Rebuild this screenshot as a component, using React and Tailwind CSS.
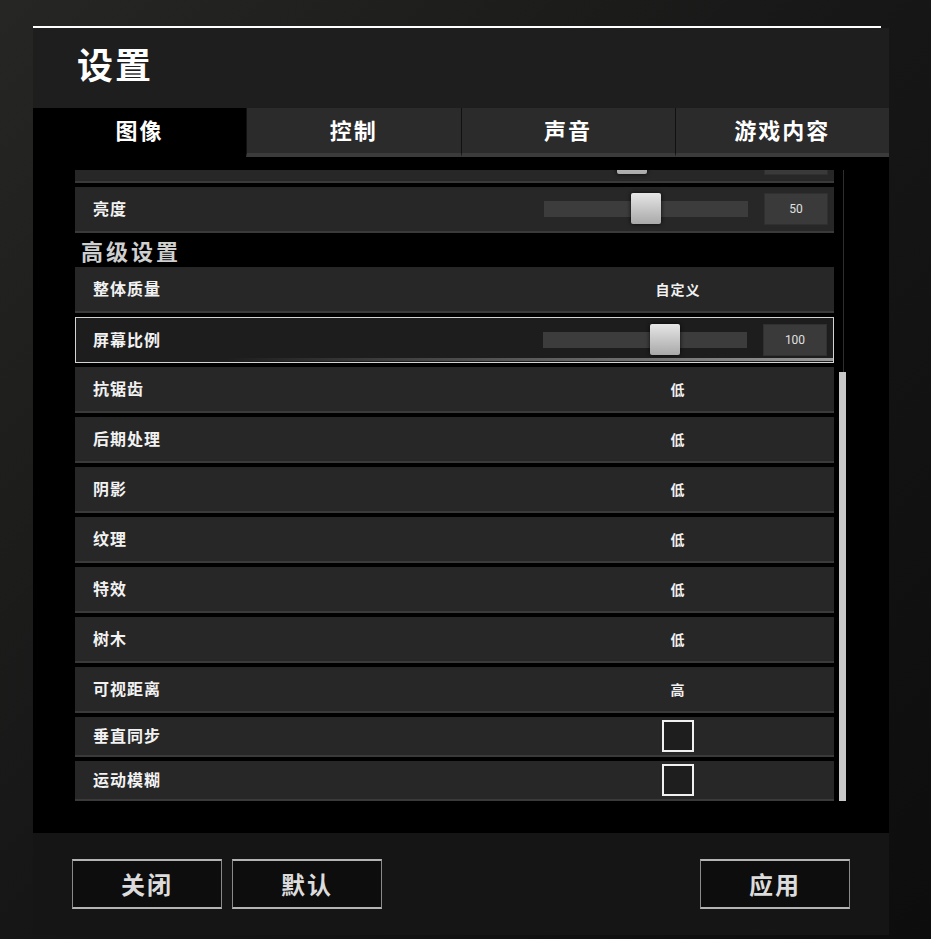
import React from 'react';

const FONT = { fontFamily: '"Noto Sans CJK SC", "Noto Sans", sans-serif' };

const TABS = ['图像', '控制', '声音', '游戏内容'];

const ROWS = [
  { label: '整体质量', type: 'text', value: '自定义' },
  { label: '屏幕比例', type: 'slider', value: 100, pos: 0.615, active: true },
  { label: '抗锯齿', type: 'text', value: '低' },
  { label: '后期处理', type: 'text', value: '低' },
  { label: '阴影', type: 'text', value: '低' },
  { label: '纹理', type: 'text', value: '低' },
  { label: '特效', type: 'text', value: '低' },
  { label: '树木', type: 'text', value: '低' },
  { label: '可视距离', type: 'text', value: '高' },
  { label: '垂直同步', type: 'check' },
  { label: '运动模糊', type: 'check' },
];

function Slider({ value, pos }) {
  return (
    <div className="flex items-center w-[290px] h-full">
      <div className="relative w-[204px] h-[16px] bg-[#3c3c3c]">
        <div
          className="absolute top-[-8px] w-[30px] h-[31px] rounded-[2px] bg-gradient-to-b from-[#e6e6e6] to-[#a9a9a9] shadow-[0_0_4px_rgba(0,0,0,0.8)]"
          style={{ left: `${Math.round(pos * 174)}px` }}
        />
      </div>
      <div className="ml-[16px] w-[64px] h-[32px] flex items-center justify-center bg-[#3a3a3a] border border-[#303030] text-[12px] text-[#e0e0e0]" style={{ fontFamily: 'Roboto, "Noto Sans", sans-serif' }}>
        {value}
      </div>
    </div>
  );
}

function Row({ row }) {
  const h = row.type === 'check' ? 'h-[40px]' : 'h-[46px]';
  const base = row.active
    ? 'border border-[#d4d4d4] bg-[#1d1d1d]'
    : 'bg-[#272727] border-b-2 border-[#3a3a3a]';
  return (
    <div className={`relative flex items-center ${h} ${base}`}>
      <div className={`flex-1 text-[16px] font-bold text-[#f2f2f2] tracking-[1px] -mt-[2px] ${row.active ? 'pl-[17px]' : 'pl-[18px]'}`}>
        {row.label}
      </div>
      {row.type === 'slider' && <Slider value={row.value} pos={row.pos} />}
      {row.type === 'text' && (
        <div className="w-[290px] flex">
          <div className="w-[268px] text-center text-[14px] font-bold text-[#f0f0f0] tracking-[1px]">{row.value}</div>
        </div>
      )}
      {row.type === 'check' && (
        <div className="w-[290px] flex">
          <div className="w-[268px] flex justify-center">
            <div className="w-[32px] h-[32px] border-2 border-[#f0f0f0] bg-[#1e1e1e]" />
          </div>
        </div>
      )}
      {row.active && (
        <div className="absolute left-[150px] right-0 bottom-[1px] h-[3px] bg-gradient-to-r from-transparent via-[#5a5a5a] to-[#9a9a9a]" />
      )}
    </div>
  );
}

function FooterButton({ children }) {
  return (
    <button className="w-[150px] h-[50px] bg-[#0d0d0d] border-x border-y-2 border-x-[#8a8a8a] border-y-[#b4b4b4] text-[24px] font-bold text-[#dcdcdc] tracking-[2px] flex items-center justify-center">
      {children}
    </button>
  );
}

export default function App() {
  return (
    <div className="w-[931px] h-[939px] overflow-hidden bg-gradient-to-br from-[#262624] via-[#161616] to-[#0d0d0d] pt-[26px]" style={FONT}>
      <div className="ml-[33px] w-[856px] flex flex-col">
        <div className="h-[2px] w-[848px] bg-white" />
        {/* header */}
        <div className="h-[80px] bg-[#1e1e1e] flex items-center pl-[44px]">
          <h1 className="text-[36px] font-bold text-white tracking-[2px] leading-none -mt-[10px]">设置</h1>
        </div>
        {/* tabs */}
        <div className="flex h-[49px]">
          {TABS.map((t, i) => (
            <div
              key={t}
              className={`flex-1 flex items-center justify-center text-[22px] font-bold text-white tracking-[2px] ${
                i === 0 ? 'bg-black' : 'bg-[#2b2b2b] border-l border-[#111] border-b-4 border-b-[#3b3b3b]'
              }`}
            >
              <span className={i === 0 ? '-mt-[6px]' : '-mt-[2px]'}>{t}</span>
            </div>
          ))}
        </div>
        {/* content */}
        <div className="h-[676px] bg-black flex pt-[13px]">
          <div className="ml-[42px] w-[759px] h-[631px] overflow-hidden">
            <div className="-mt-[33px] flex flex-col gap-[4px]">
              <div className="relative flex items-center h-[46px] bg-[#272727] border-b-2 border-[#3a3a3a]">
                <div className="flex-1" />
                <Slider value="" pos={0.42} />
              </div>
              <div className="flex items-center h-[46px] bg-[#272727] border-b-2 border-[#3a3a3a]">
                <div className="flex-1 pl-[18px] text-[16px] font-bold text-[#f2f2f2] tracking-[1px] -mt-[2px]">亮度</div>
                <Slider value={50} pos={0.5} />
              </div>
              <div className="h-[26px] flex items-end pl-[6px] text-[22px] font-bold text-[#cfcfcf] tracking-[3px] leading-none pb-[2px]">
                高级设置
              </div>
              {ROWS.map((r) => (
                <Row key={r.label} row={r} />
              ))}
            </div>
          </div>
          {/* scrollbar */}
          <div className="relative ml-[5px] w-[7px] h-[631px]">
            <div className="absolute left-[4px] top-0 bottom-0 w-[1px] bg-[#2e2e2e]" />
            <div className="absolute left-0 top-[202px] bottom-0 w-[7px] bg-[#c8c8c8]" />
          </div>
        </div>
        {/* footer */}
        <div className="h-[102px] bg-[#151515] flex items-center px-[39px]">
          <div className="flex gap-[10px]">
            <FooterButton>关闭</FooterButton>
            <FooterButton>默认</FooterButton>
          </div>
          <div className="flex-1" />
          <FooterButton>应用</FooterButton>
        </div>
      </div>
    </div>
  );
}
